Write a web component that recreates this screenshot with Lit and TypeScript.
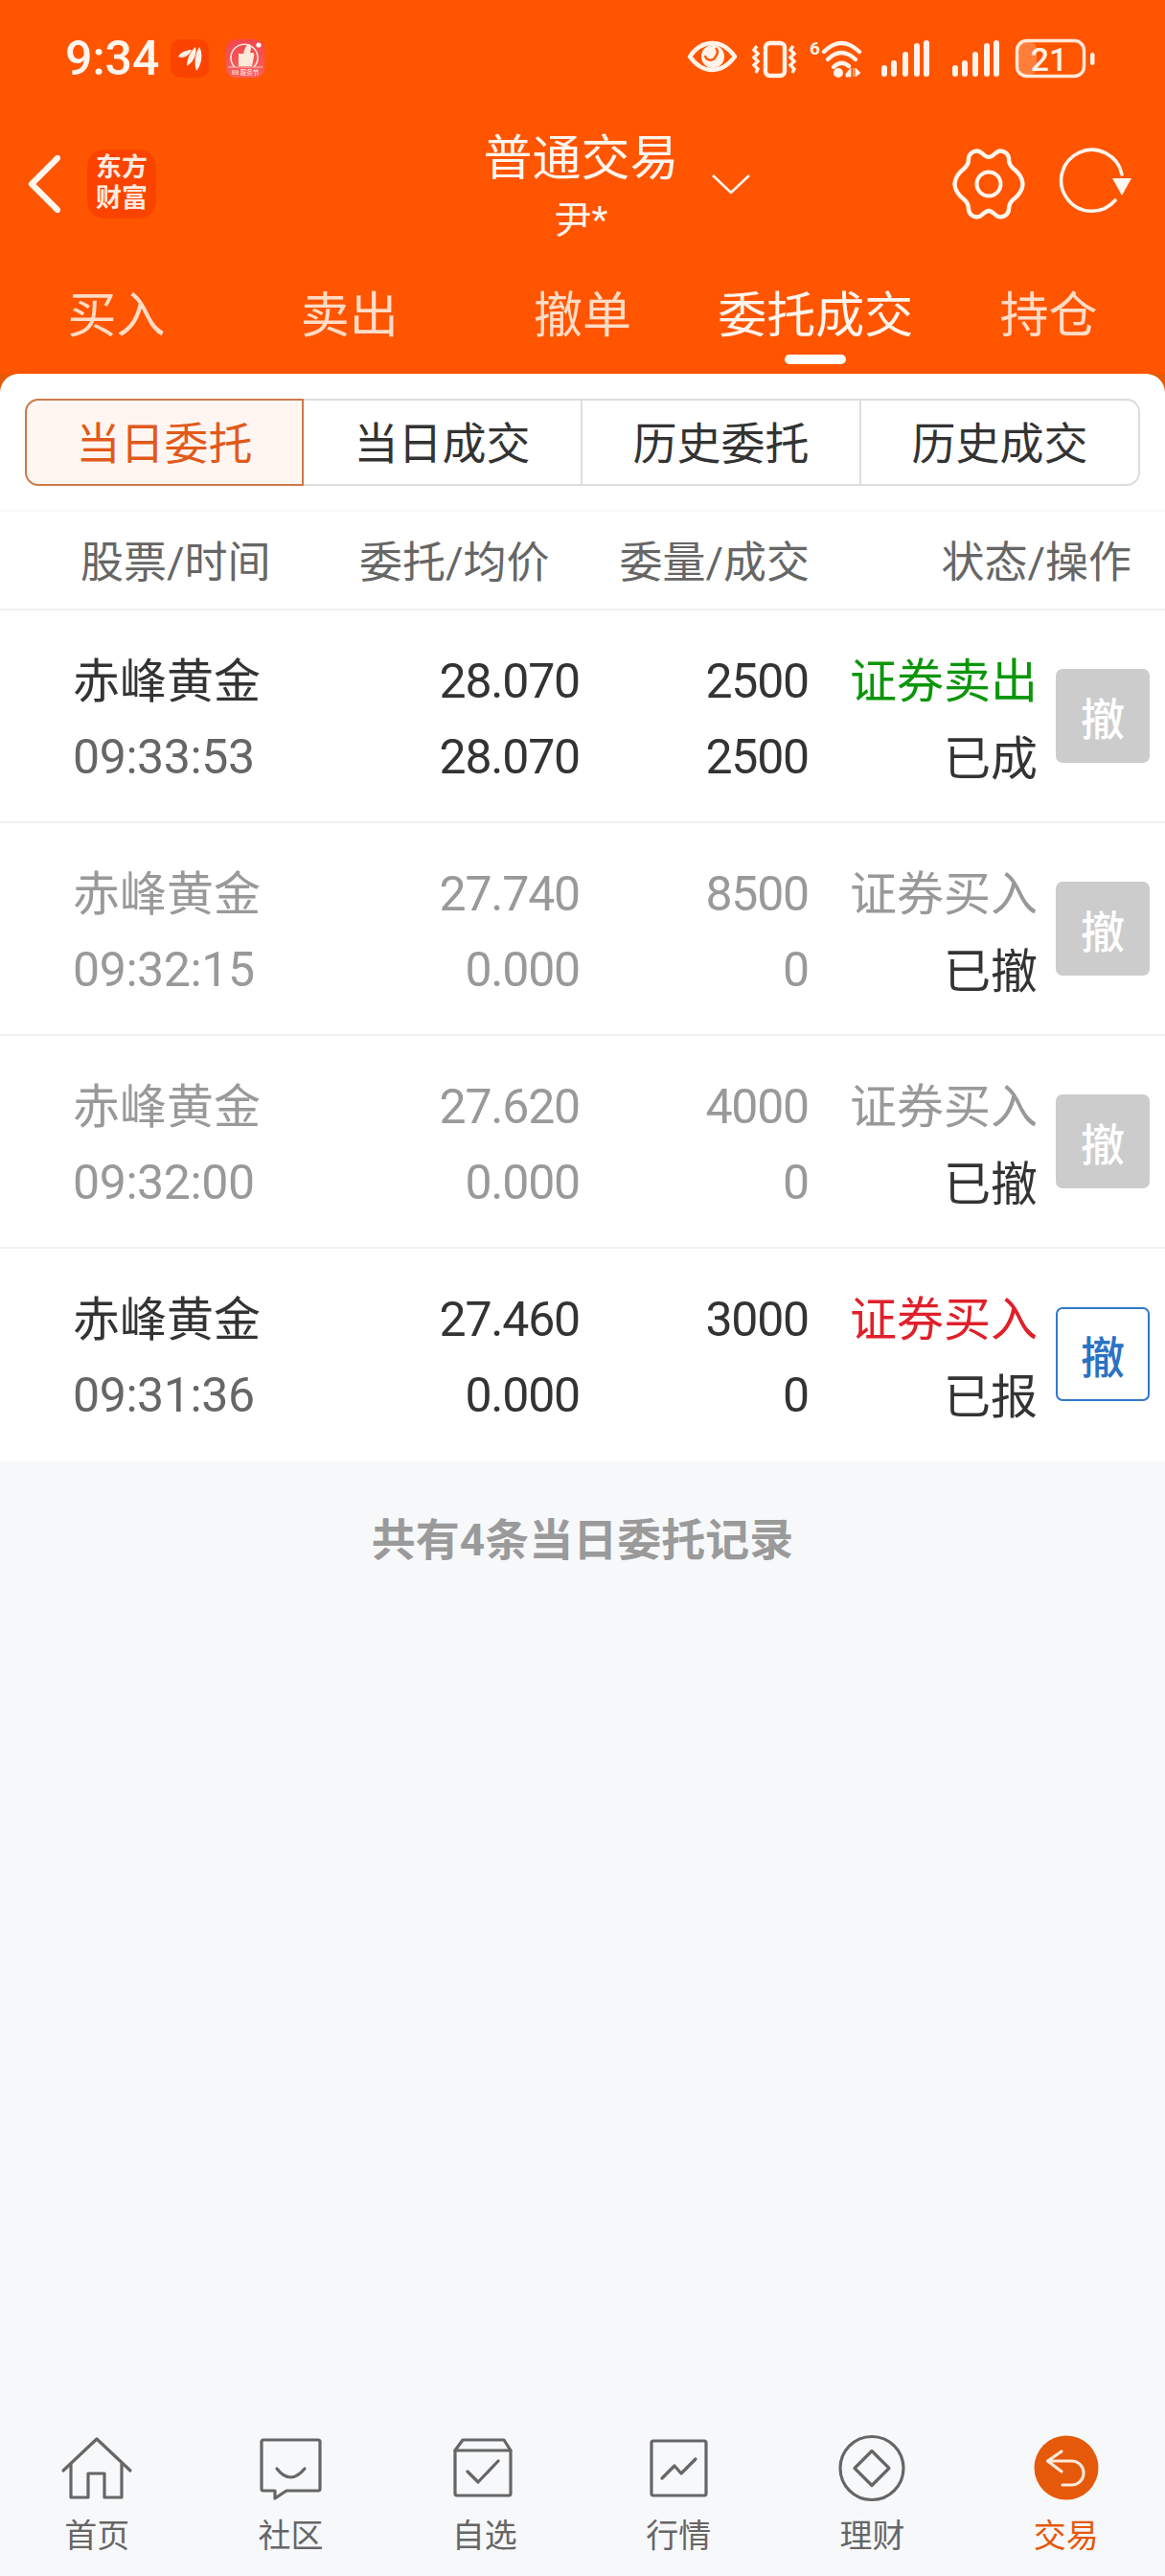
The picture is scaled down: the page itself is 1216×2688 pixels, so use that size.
import { LitElement, html, css, svg } from "lit";
import { customElement } from "lit/decorators.js";
import { classMap } from "lit/directives/class-map.js";

type Order = {
  time: string;
  price: string;
  avg: string;
  qty: string;
  filled: string;
  side: string;
  state: string;
  tone: "done" | "dim" | "live";
  sideTone: "green" | "grey" | "red";
  active?: boolean;
};

const ORDERS: Order[] = [
  { time: "09:33:53", price: "28.070", avg: "28.070", qty: "2500", filled: "2500", side: "证券卖出", state: "已成", tone: "done", sideTone: "green" },
  { time: "09:32:15", price: "27.740", avg: "0.000", qty: "8500", filled: "0", side: "证券买入", state: "已撤", tone: "dim", sideTone: "grey" },
  { time: "09:32:00", price: "27.620", avg: "0.000", qty: "4000", filled: "0", side: "证券买入", state: "已撤", tone: "dim", sideTone: "grey" },
  { time: "09:31:36", price: "27.460", avg: "0.000", qty: "3000", filled: "0", side: "证券买入", state: "已报", tone: "live", sideTone: "red", active: true },
];

const TABS = ["买入", "卖出", "撤单", "委托成交", "持仓"];
const SEGMENTS = ["当日委托", "当日成交", "历史委托", "历史成交"];

const SIGNAL_BARS = [12, 17, 26, 35, 38];

const signal = (xs: number[]) =>
  xs.map((x, i) => svg`<rect x=${x - 3} y=${80 - SIGNAL_BARS[i]} width="6" height=${SIGNAL_BARS[i]} rx="3" fill="#fff3ea" />`);

const statusIcons = svg`
  <path d="M720 59 C727 49 735 45 743.5 45 C752 45 760 49 767 59 C760 69 752 73 743.5 73 C735 73 727 69 720 59Z" fill="none" stroke="#fff3ea" stroke-width="4.4" stroke-linejoin="round" />
  <circle cx="744" cy="59" r="12" fill="#fff3ea" />
  <path d="M736 58 C737 63 744 65 747 59 C750 55 749 52 747 50" fill="none" stroke="#ff5500" stroke-width="2.4" />
  <rect x="799" y="45" width="20" height="34" rx="4.5" fill="none" stroke="#fff3ea" stroke-width="4.4" />
  <path d="M790 48 l-3 4 l4 4 l-4 4 l4 4 l-4 4 l4 4 l-2 4" fill="none" stroke="#fff3ea" stroke-width="3.4" />
  <path d="M828 48 l-3 4 l4 4 l-4 4 l4 4 l-4 4 l4 4 l-2 4" fill="none" stroke="#fff3ea" stroke-width="3.4" />
  <text x="845" y="57" font-size="19" font-weight="700" fill="#fff3ea" font-family="Roboto, sans-serif">6</text>
  <path d="M860 54 Q878 36 897 54" fill="none" stroke="#fff3ea" stroke-width="4.4" stroke-linecap="round" />
  <path d="M864 62 Q878 48 893 62" fill="none" stroke="#fff3ea" stroke-width="4.4" stroke-linecap="round" />
  <path d="M870 70 Q878 62 886 69" fill="none" stroke="#fff3ea" stroke-width="4.4" stroke-linecap="round" />
  <circle cx="875" cy="76" r="5" fill="#fff3ea" />
  <path d="M883 77 L888 71 V80 H883Z M891 71 V80 M893 71 L898 76 L893 80Z" fill="#fff3ea" stroke="#fff3ea" stroke-width="0.8" />
  ${signal([923, 933, 945, 957, 967])}
  ${signal([997, 1007, 1018, 1030, 1040])}
  <rect x="1063" y="44" width="19" height="34" rx="7" fill="#ff7f3a" />
  <rect x="1061.5" y="42.5" width="70" height="37" rx="10" fill="none" stroke="#ffe9da" stroke-width="3.4" />
  <text x="1095" y="74" text-anchor="middle" font-size="34" font-weight="500" fill="#fff3ea" font-family="Roboto, sans-serif">21</text>
  <rect x="1138" y="55" width="4.5" height="13" rx="2.2" fill="#fff3ea" />
`;

// nav bar tab icons share an 80x72 box
const ICONS = [
  svg`<path d="M5 38 L40 5 L75 38" /><path d="M13 31 V66 H31 V41 H48 V66 H66 V31" />`,
  svg`<path d="M12 6 H69 Q71 6 71 8 V57 Q71 59 69 59 H36 L24 67 V59 H12 Q10 59 10 57 V8 Q10 6 12 6Z" /><path d="M26 36 Q40 54 55 36" />`,
  svg`<path d="M11 17 H67 V62 Q67 64 65 64 H11 Q9 64 9 62 V17Z" /><path d="M9 17 L17 6 H60 L67 17" /><path d="M22 39 L33 50 L54 28" />`,
  svg`<rect x="12" y="7" width="57" height="57" rx="2" /><path d="M23 46 L36 33 L43 41 L58 26" />`,
  svg`<circle cx="40" cy="35.5" r="33" /><path d="M40 17.5 L58 35.5 L40 53.5 L22 35.5Z" />`,
  svg`<circle cx="40" cy="35" r="33.5" fill="#e5590a" stroke="none" /><path d="M35 18 L20.5 28 L35 39 M20.5 28 H45.5 A12.5 12.5 0 0 1 45.5 53 H36" stroke="#fdeadd" />`,
];

const NAV_ITEMS = ["首页", "社区", "自选", "行情", "理财", "交易"];

@customElement("app-root")
export class AppRoot extends LitElement {
  static styles = css`
    :host {
      display: flex;
      flex-direction: column;
      width: 1216px;
      height: 2688px;
      overflow: hidden;
      background: #f7f8fa;
      color: #333;
      font-family: Roboto, "Noto Sans CJK SC", sans-serif;
    }
    .head {
      background: #ff5500;
      color: #fff;
    }
    .status {
      display: flex;
      align-items: center;
      justify-content: space-between;
      height: 122px;
      padding: 0 66px 0 68px;
    }
    .status-left {
      display: flex;
      align-items: center;
    }
    .clock {
      width: 110px;
      font-size: 50px;
      font-weight: 500;
      color: #fff6ef;
    }
    .note {
      display: block;
      width: 40px;
      height: 40px;
      margin-right: 18px;
    }
    .status-right {
      display: block;
      width: 440px;
      height: 52px;
    }
    .nav {
      display: grid;
      grid-template-columns: 1fr 206px 1fr;
      height: 140px;
      align-items: center;
      padding: 0 32px 0 29px;
      box-sizing: border-box;
    }
    .nav-left,
    .nav-right {
      display: flex;
      align-items: center;
    }
    .back {
      display: block;
      width: 34px;
      height: 60px;
    }
    .logo {
      width: 72px;
      height: 72px;
      margin-left: 28px;
      border-radius: 18px;
      background: #fb4300;
      color: #ffeadf;
      font-size: 27px;
      font-weight: 700;
      line-height: 32px;
      text-align: center;
      padding-top: 3px;
      box-sizing: border-box;
    }
    .title {
      text-align: center;
      font-size: 51px;
      line-height: 66px;
      color: #fff6ef;
    }
    .title small {
      display: block;
      margin-top: 10px;
      font-size: 39px;
      line-height: 42px;
    }
    .caret {
      display: block;
      width: 40px;
      height: 20px;
      margin-left: 33px;
    }
    .tool {
      display: block;
    }
    .gear {
      width: 76px;
      height: 76px;
      margin-left: auto;
    }
    .refresh {
      width: 80px;
      height: 76px;
      margin-left: 34px;
    }
    .tabs {
      display: grid;
      grid-template-columns: repeat(5, 1fr);
      height: 128px;
    }
    .tab {
      display: flex;
      flex-direction: column;
      align-items: center;
      padding-top: 38px;
      font-size: 51px;
      line-height: 60px;
      color: #ffdcc6;
    }
    .tab.on {
      color: #fff6ef;
    }
    .tab i {
      width: 64px;
      height: 10px;
      margin-top: 10px;
      border-radius: 5px;
    }
    .tab.on i {
      background: #fff;
    }
    .under {
      background: #e55a05;
    }
    .sheet {
      background: #fff;
      border-radius: 20px 20px 0 0;
      padding-top: 26px;
    }
    .seg {
      display: grid;
      grid-template-columns: repeat(4, 291px);
      margin: 0 26px;
      height: 91px;
    }
    .seg div {
      display: flex;
      align-items: center;
      justify-content: center;
      box-sizing: border-box;
      padding-bottom: 5px;
      border: 2px solid #dcdcdc;
      border-left: none;
      font-size: 46px;
      color: #333;
    }
    .seg div:first-child {
      border-left: 2px solid #cc7a4a;
      border-radius: 14px 0 0 14px;
    }
    .seg div:last-child {
      border-radius: 0 14px 14px 0;
    }
    .seg div.on {
      border-color: #cc7a4a;
      background: #fff6f2;
      color: #e2591a;
    }
    .cols {
      display: grid;
      grid-template-columns: 291px 225px 245px 336px;
      align-items: center;
      height: 105px;
      margin-top: 25px;
      box-sizing: border-box;
      padding: 0 0 3px 84px;
      border-top: 2px solid #f8f8f8;
      border-bottom: 2px solid #f0f0f0;
      font-size: 45px;
      color: #666;
    }
    .cols span:nth-child(3),
    .cols span:nth-child(4) {
      text-align: right;
    }
    .row {
      display: grid;
      grid-template-columns: 304px 225px 239px 239px 117px;
      grid-template-rows: 79px 79px;
      align-items: center;
      height: 222px;
      box-sizing: border-box;
      padding: 33px 0 0 76px;
      border-bottom: 2px solid #f0f0f0;
      font-size: 50px;
      color: #333;
    }
    .row:last-child {
      border-bottom: none;
    }
    .name {
      font-size: 49px;
      margin-bottom: 6px;
    }
    .time {
      color: #666;
      letter-spacing: -0.4px;
      margin-top: 2px;
    }
    .num {
      text-align: right;
      letter-spacing: -1.2px;
      margin-top: 2px;
    }
    .side,
    .state {
      text-align: right;
      font-size: 49px;
    }
    .side {
      margin-bottom: 6px;
    }
    .state {
      margin-bottom: 2px;
    }
    .row.dim .name,
    .row.dim .time,
    .row.dim .num {
      color: #999;
    }
    .green {
      color: #0a960a;
    }
    .grey {
      color: #999;
    }
    .red {
      color: #e0202a;
    }
    .cancel {
      grid-column: 5;
      grid-row: 1 / span 2;
      display: flex;
      align-items: center;
      justify-content: center;
      width: 98px;
      height: 98px;
      margin: 0 0 4px 19px;
      box-sizing: border-box;
      border-radius: 7px;
      background: #ccc;
      color: #fff;
      font-size: 46px;
      font-weight: 500;
    }
    .cancel.live {
      background: #fff;
      border: 2px solid #3078c8;
      color: #2a72c4;
    }
    .total {
      margin-top: 48px;
      text-align: center;
      font-size: 46px;
      font-weight: 700;
      line-height: 68px;
      color: #9a9a9a;
    }
    .foot {
      display: grid;
      grid-template-columns: repeat(6, 1fr);
      margin-top: auto;
      height: 148px;
      padding-right: 2px;
    }
    .item {
      display: flex;
      flex-direction: column;
      align-items: center;
      font-size: 34px;
      line-height: 44px;
      color: #666;
    }
    .item.on {
      color: #e5590a;
    }
    .item svg {
      display: block;
      width: 80px;
      height: 72px;
      margin-bottom: 12px;
      fill: none;
      stroke: #666;
      stroke-width: 3.2;
      stroke-linejoin: round;
      stroke-linecap: round;
    }
  `;

  private renderOrder(o: Order) {
    return html`
      <div class=${classMap({ row: true, dim: o.tone === "dim" })}>
        <span class="name">赤峰黄金</span>
        <span class="num">${o.price}</span>
        <span class="num">${o.qty}</span>
        <span class="side ${o.sideTone}">${o.side}</span>
        <span class="time">${o.time}</span>
        <span class="num">${o.avg}</span>
        <span class="num">${o.filled}</span>
        <span class="state">${o.state}</span>
        <span class=${classMap({ cancel: true, live: !!o.active })}>撤</span>
      </div>
    `;
  }

  protected render() {
    return html`
      <div class="head">
        <div class="status">
          <div class="status-left">
            <span class="clock">9:34</span>
            <svg class="note" viewBox="0 0 40 40">
              <rect width="40" height="40" rx="10" fill="#fb4300" />
              <path d="M8 18 C11 13 17 11 22 11 C20 16 14 21 8 18Z" fill="#fff0e6" />
              <path d="M17 28 C17 20 21 12 26 8 C28 15 24 24 17 28Z" fill="#fff0e6" />
              <path d="M27 33 C24 25 26 14 30 8 C34 14 33 26 27 33Z" fill="#fff0e6" />
            </svg>
            <svg class="note" viewBox="0 0 40 40">
              <defs>
                <linearGradient id="red" x1="0" y1="0" x2="0" y2="1">
                  <stop offset="0" stop-color="#f2474d" />
                  <stop offset="1" stop-color="#f7605f" />
                </linearGradient>
              </defs>
              <rect width="40" height="40" rx="10" fill="url(#red)" />
              <path d="M9 29 A14 14 0 1 1 29 29" fill="none" stroke="#ffe6dc" stroke-width="1.6" />
              <path d="M13 15 H18 C19 11 21 5 24 5 C27 6 26 11 25 14 H28 Q30 15 29 18 L27 28 H13Z" fill="#ffe9d8" />
              <path d="M2 29 H38" stroke="#f9c6b8" stroke-width="1" />
              <text x="20" y="37" text-anchor="middle" font-size="6.5" fill="#fff2ea" font-family="Roboto, 'Noto Sans CJK SC', sans-serif">88 服务节</text>
              <circle cx="34" cy="6" r="2.6" fill="#fff" />
            </svg>
          </div>
          <svg class="status-right" viewBox="710 35 440 52">${statusIcons}</svg>
        </div>
        <div class="nav">
          <div class="nav-left">
            <svg class="back" viewBox="0 0 34 60">
              <path d="M31 3 L4 30 L31 57" fill="none" stroke="#fff6ef" stroke-width="6.2" stroke-linecap="round" stroke-linejoin="round" />
            </svg>
            <div class="logo">东方<br />财富</div>
          </div>
          <div class="title">普通交易<small>尹*</small></div>
          <div class="nav-right">
            <svg class="caret" viewBox="0 0 40 20">
              <path d="M1 1 L20 19 L39 1" fill="none" stroke="#fff6ef" stroke-width="2.6" />
            </svg>
            <svg class="tool gear" viewBox="-38 -38 76 76">
              <path
                d="M0 -28 C-5 -28 -7 -34.5 -12 -34.5 C-17 -34.5 -21 -31 -21 -26 C-21 -21 -23 -18 -27 -15 C-31 -12 -35.5 -6 -35.5 0 C-35.5 6 -31 12 -27 15 C-23 18 -21 21 -21 26 C-21 31 -17 34.5 -12 34.5 C-7 34.5 -5 28 0 28 C5 28 7 34.5 12 34.5 C17 34.5 21 31 21 26 C21 21 23 18 27 15 C31 12 35.5 6 35.5 0 C35.5 -6 31 -12 27 -15 C23 -18 21 -21 21 -26 C21 -31 17 -34.5 12 -34.5 C7 -34.5 5 -28 0 -28Z"
                fill="none"
                stroke="#fff6ef"
                stroke-width="4.4"
                stroke-linejoin="round"
              />
              <circle r="12.5" fill="none" stroke="#fff6ef" stroke-width="4" />
            </svg>
            <svg class="tool refresh" viewBox="0 0 80 76">
              <path d="M60 55 A32 32 0 1 1 67 28" fill="none" stroke="#fff6ef" stroke-width="3.6" stroke-linecap="round" />
              <path d="M57 32 H77 L67 50Z" fill="#fff6ef" />
            </svg>
          </div>
        </div>
        <div class="tabs">
          ${TABS.map(
            (t) => html`<div class=${classMap({ tab: true, on: t === "委托成交" })}>${t}<i></i></div>`,
          )}
        </div>
      </div>
      <div class="under">
        <div class="sheet">
          <div class="seg">
            ${SEGMENTS.map(
              (s, i) => html`<div class=${classMap({ on: i === 0 })}>${s}</div>`,
            )}
          </div>
          <div class="cols">
            <span>股票/时间</span>
            <span>委托/均价</span>
            <span>委量/成交</span>
            <span>状态/操作</span>
          </div>
          ${ORDERS.map((o) => this.renderOrder(o))}
        </div>
      </div>
      <div class="total">共有4条当日委托记录</div>
      <div class="foot">
        ${NAV_ITEMS.map(
          (n, i) => html`
            <div class=${classMap({ item: true, on: i === 5 })}>
              <svg viewBox="0 0 80 72">${ICONS[i]}</svg>
              ${n}
            </div>
          `,
        )}
      </div>
    `;
  }
}
